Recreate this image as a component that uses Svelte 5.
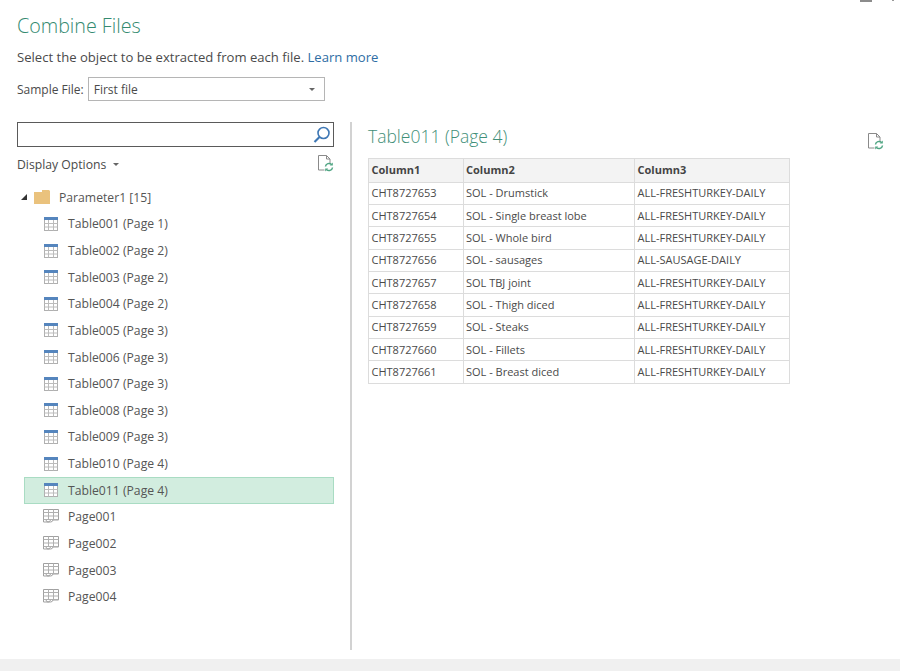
<script>
  const tables = [
    ['Table001 (Page 1)', false], ['Table002 (Page 2)', false], ['Table003 (Page 2)', false],
    ['Table004 (Page 2)', false], ['Table005 (Page 3)', false], ['Table006 (Page 3)', false],
    ['Table007 (Page 3)', false], ['Table008 (Page 3)', false], ['Table009 (Page 3)', false],
    ['Table010 (Page 4)', false], ['Table011 (Page 4)', true]
  ];
  const pages = ['Page001', 'Page002', 'Page003', 'Page004'];
  const rows = [
    ['CHT8727653', 'SOL - Drumstick', 'ALL-FRESHTURKEY-DAILY'],
    ['CHT8727654', 'SOL - Single breast lobe', 'ALL-FRESHTURKEY-DAILY'],
    ['CHT8727655', 'SOL - Whole bird', 'ALL-FRESHTURKEY-DAILY'],
    ['CHT8727656', 'SOL - sausages', 'ALL-SAUSAGE-DAILY'],
    ['CHT8727657', 'SOL TBJ joint', 'ALL-FRESHTURKEY-DAILY'],
    ['CHT8727658', 'SOL - Thigh diced', 'ALL-FRESHTURKEY-DAILY'],
    ['CHT8727659', 'SOL - Steaks', 'ALL-FRESHTURKEY-DAILY'],
    ['CHT8727660', 'SOL - Fillets', 'ALL-FRESHTURKEY-DAILY'],
    ['CHT8727661', 'SOL - Breast diced', 'ALL-FRESHTURKEY-DAILY']
  ];
</script>

{#snippet refresh()}
  <svg class="refresh" width="16" height="17" viewBox="0 0 16 17" fill="none">
    <path d="M.5.5h8l3.5 3.5v4M8.500.5v3.500h3.500M.5.5v14.500h6" stroke="#8a8a8a"/>
    <path d="M7.500 11.500a3.500 3.500 0 0 1 6-2" stroke="#4fa583" stroke-width="1.500"/>
    <path d="M14.800 7.500v3h-3z" fill="#4fa583"/>
    <path d="M14.500 12.500a3.500 3.500 0 0 1-6 2" stroke="#4fa583" stroke-width="1.500"/>
    <path d="M7.200 16.500v-3h3z" fill="#4fa583"/>
  </svg>
{/snippet}

{#snippet tableIcon()}
  <svg class="item-icon" width="14" height="14" viewBox="0 0 14 14" fill="none">
    <rect x=".5" y=".5" width="13" height="13" fill="#fff" stroke="#b0b0b0"/>
    <rect x="0" y="0" width="14" height="3" fill="#5585bd"/>
    <path d="M.5 6.500h13M.5 10h13M4.500 3v10.500M9.500 3v10.500" stroke="#bcbcbc"/>
  </svg>
{/snippet}

{#snippet pageIcon()}
  <svg class="item-icon page" width="16" height="15" viewBox="0 0 16 15" fill="none">
    <path d="M.5.500h15v10.500h-5.500q-.5 2-2.500 2h-7z" fill="#fff" stroke="#a0a0a0"/>
    <path d="M.5 3.500h15M.5 7h15M.5 10.500h15M5.500.5v10M10.500.5v10" stroke="#b0b0b0"/>
    <path d="M3 11q.5 2 2 2q2 0 2.500-2" stroke="#a0a0a0"/>
  </svg>
{/snippet}

<div class="window">
  <div class="controls"><span class="min"></span><span class="close"></span></div>
  <div class="content">
    <h1>Combine Files</h1>
    <p class="desc">Select the object to be extracted from each file. <span class="link">Learn more</span></p>
    <div class="sample">
      <span>Sample File:</span>
      <div class="select"><span>First file</span><i class="caret"></i></div>
    </div>
    <div class="panes">
      <section class="left">
        <div class="search">
          <svg width="18" height="18" viewBox="0 0 18 18" fill="none">
            <circle cx="10.500" cy="7" r="5.500" stroke="#3f78b5" stroke-width="1.600"/>
            <path d="M6.500 11L1.500 16" stroke="#3f78b5" stroke-width="2.200"/>
          </svg>
        </div>
        <div class="options">
          <span class="opt-label">Display Options <i class="caret small"></i></span>
          {@render refresh()}
        </div>
        <div class="tree">
          <div class="root">
            <i class="expander"></i>
            <svg width="16" height="14" viewBox="0 0 16 14"><path d="M0 2h8V0h7l1 1v13H0z" fill="#eac27d"/></svg>
            <span>Parameter1 [15]</span>
          </div>
          {#each tables as [name, selected]}
            <div class="item" class:selected>
              {@render tableIcon()}<span>{name}</span>
            </div>
          {/each}
          {#each pages as name}
            <div class="item">
              {@render pageIcon()}<span>{name}</span>
            </div>
          {/each}
        </div>
      </section>
      <section class="right">
        <div class="head">
          <h2>Table011 (Page 4)</h2>
          {@render refresh()}
        </div>
        <table>
          <thead><tr><th>Column1</th><th>Column2</th><th>Column3</th></tr></thead>
          <tbody>
            {#each rows as r}
              <tr><td>{r[0]}</td><td>{r[1]}</td><td>{r[2]}</td></tr>
            {/each}
          </tbody>
        </table>
      </section>
    </div>
  </div>
  <footer></footer>
</div>

<style>
  :global(body) { margin: 0; background: #fff; }
  .window {
    position: relative;
    width: 900px;
    height: 671px;
    display: flex;
    flex-direction: column;
    overflow: hidden;
    font-family: "Open Sans", "Noto Sans", sans-serif;
    color: #444;
    background: #fff;
  }
  .controls { position: absolute; top: 0; right: 0; }
  .min { position: absolute; top: 0; right: 28px; width: 12px; height: 2px; background: #8c8c8c; }
  .close { position: absolute; top: 0; right: 6px; width: 2px; height: 1px; background: #999; }
  .content { flex: 1; min-height: 0; padding: 13px 0 9px 17px; display: flex; flex-direction: column; }
  h1 {
    margin: 0;
    font-size: 19.700px;
    line-height: 25px;
    font-weight: 300;
    color: #348a70;
  }
  .desc { margin: 10px 0 0; font-size: 13.100px; line-height: 18px; color: #4a4a4a; }
  .link { color: #2e6da4; }
  .sample { margin-top: 11px; display: flex; align-items: center; gap: 4px; font-size: 12px; height: 24px; color: #4a4a4a; }
  .select {
    box-sizing: border-box;
    width: 237px;
    height: 24px;
    border: 1px solid #b5b5b5;
    display: flex;
    align-items: center;
    justify-content: space-between;
    padding: 0 9px 0 5px;
  }
  .caret { width: 0; height: 0; border-left: 3.500px solid transparent; border-right: 3.500px solid transparent; border-top: 3.500px solid #666; }
  .small { display: inline-block; vertical-align: middle; margin: 0 0 2px 4px; }
  .panes { flex: 1; min-height: 0; display: flex; margin-top: 21px; }
  .left { width: 333px; flex: none; border-right: 2px solid #d2d2d2; }
  .search {
    box-sizing: border-box;
    width: 317px;
    height: 25px;
    border: 1px solid #5a5a5a;
    display: flex;
    justify-content: flex-end;
    align-items: center;
    padding-right: 2px;
  }
  .options {
    width: 308px;
    display: flex;
    justify-content: space-between;
    align-items: center;
    margin-top: 7px;
    height: 20px;
    font-size: 12.200px;
    color: #4a4a4a;
  }
  .options .refresh { margin-right: -9px; margin-top: -2px; }
  .tree { margin-top: 10px; font-size: 12.200px; color: #555; }
  .root { height: 26.640px; display: flex; align-items: center; padding-left: 4px; }
  .expander {
    width: 0; height: 0; margin-right: 7px;
    border-left: 6px solid transparent; border-bottom: 6px solid #333;
  }
  .root svg { margin-right: 9px; }
  .item {
    box-sizing: border-box;
    width: 310px;
    height: 26.640px;
    margin-left: 7px;
    padding-left: 19px;
    display: flex;
    align-items: center;
    gap: 9px;
    border: 1px solid transparent;
  }
  .item.selected { background: #d2eddf; border-color: #a9dcc3; }
  .item-icon { flex: none; margin-right: 1px; }
  .item-icon.page { margin-left: -1px; margin-right: 0; }
  .right { flex: 1; padding: 0 0 0 16px; min-width: 0; }
  .head { display: flex; justify-content: space-between; width: 516px; height: 36px; align-items: flex-start; }
  .head .refresh { margin-top: 11px; }
  h2 { margin: 2px 0 0; font-size: 17.500px; line-height: 24px; font-weight: 300; color: #3f8f78; }
  table { border-collapse: collapse; table-layout: fixed; width: 422px; font-size: 11px; color: #4a4a4a; }
  th, td { border: 1px solid #dcdcdc; padding: 0 0 0 2.500px; text-align: left; white-space: nowrap; height: 21.370px; line-height: 14px; }
  th { background: #f3f3f3; font-weight: 700; height: 22.500px; color: #444; }
  th:nth-child(1) { width: 91px; }
  th:nth-child(2) { width: 168px; }
  footer { height: 12px; flex: none; background: #f0f0f0; }
</style>
